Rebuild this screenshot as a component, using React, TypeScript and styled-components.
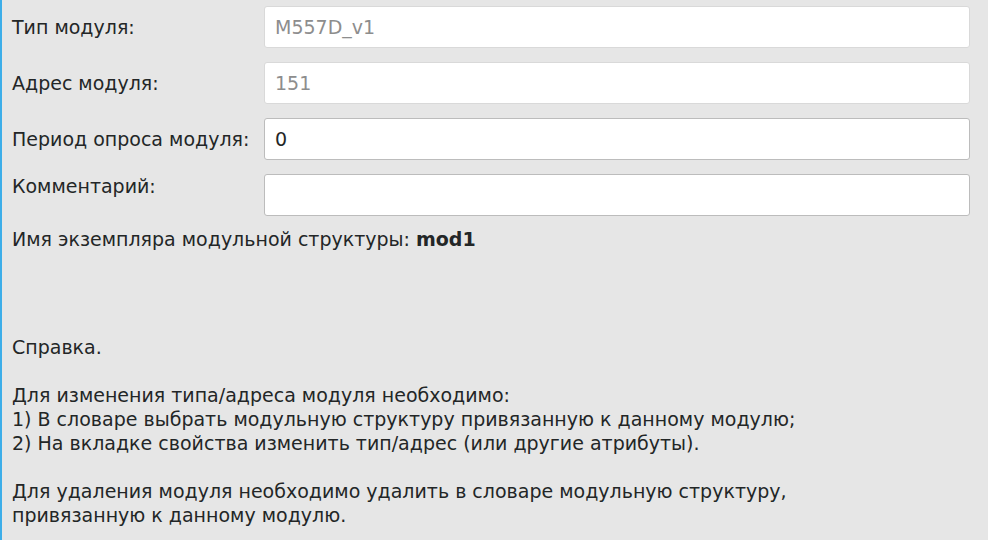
import React from "react";
import styled, { createGlobalStyle } from "styled-components";

const Global = createGlobalStyle`
  html, body { margin: 0; padding: 0; background: #e6e6e6; }
  body { font-family: "DejaVu Sans", "Noto Sans", sans-serif; }
  * { box-sizing: border-box; }
`;

const Page = styled.div`
  width: 988px;
  height: 540px;
  background: #e6e6e6;
  border-left: 2px solid #3daee9;
  padding: 6px 18px 0 10px;
  color: #232627;
  font-size: 19px;
  overflow: hidden;
`;

const Form = styled.div`
  display: grid;
  grid-template-columns: 252px 1fr;
  row-gap: 14px;
`;

const Label = styled.div<{ $top?: boolean }>`
  display: flex;
  align-items: ${(p) => (p.$top ? "flex-start" : "center")};
  padding-top: ${(p) => (p.$top ? "1px" : "0")};
  height: 42px;
  white-space: nowrap;
`;

const Field = styled.div<{ $disabled?: boolean }>`
  height: 42px;
  background: #ffffff;
  border: 1px solid ${(p) => (p.$disabled ? "#d9d9d9" : "#bcbcbc")};
  border-radius: 3px;
  display: flex;
  align-items: center;
  padding: 0 10px;
  color: ${(p) => (p.$disabled ? "#8d8d8d" : "#232627")};
`;

const Instance = styled.div`
  margin-top: 12px;
`;

const Help = styled.div`
  margin-top: 85px;
  line-height: 24px;
  white-space: pre-line;
`;

export default function App() {
  return (
    <>
      <Global />
      <Page>
        <Form>
          <Label>Тип модуля:</Label>
          <Field $disabled>M557D_v1</Field>
          <Label>Адрес модуля:</Label>
          <Field $disabled>151</Field>
          <Label>Период опроса модуля:</Label>
          <Field>0</Field>
          <Label $top>Комментарий:</Label>
          <Field />
        </Form>
        <Instance>
          Имя экземпляра модульной структуры: <b>mod1</b>
        </Instance>
        <Help>
          {`Справка.

Для изменения типа/адреса модуля необходимо:
1) В словаре выбрать модульную структуру привязанную к данному модулю;
2) На вкладке свойства изменить тип/адрес (или другие атрибуты).

Для удаления модуля необходимо удалить в словаре модульную структуру,
привязанную к данному модулю.`}
        </Help>
      </Page>
    </>
  );
}
